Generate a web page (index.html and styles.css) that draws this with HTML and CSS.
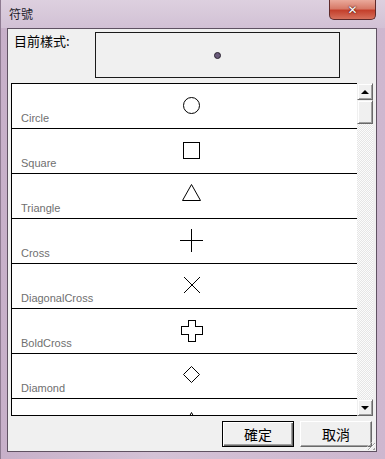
FILE: index.html
```html
<!DOCTYPE html>
<html>
<head>
    <title>符號</title>
    <link rel="stylesheet" href="styles.css">
</head>
<body>
    <div class="window">
        <!-- Barra de título -->
        <div class="titlebar">
            <span class="title">符號</span>
            <button class="close">&#x2715;</button>
        </div>

        <div class="client">
            <!-- Estilo actual -->
            <div class="current">
                <span class="current-label">目前樣式:</span>
                <div class="preview"><span class="dot"></span></div>
            </div>

            <!-- Lista de símbolos -->
            <div class="list">
                <div class="rows">
                    <div class="row">
                        <svg class="shape" width="24" height="24"><circle cx="11.5" cy="12.5" r="8"/></svg>
                        <span class="name">Circle</span>
                    </div>
                    <div class="row">
                        <svg class="shape" width="24" height="24"><rect x="3.5" y="4.5" width="16" height="16"/></svg>
                        <span class="name">Square</span>
                    </div>
                    <div class="row">
                        <svg class="shape" width="24" height="24"><polygon points="11.5,1.5 20.5,17.5 2.5,17.5"/></svg>
                        <span class="name">Triangle</span>
                    </div>
                    <div class="row">
                        <svg class="shape crisp" width="24" height="24"><path d="M0 12.5H23M11.5 1V24"/></svg>
                        <span class="name">Cross</span>
                    </div>
                    <div class="row">
                        <svg class="shape crisp" width="24" height="24"><path d="M4 4L20 20M20 4L4 20"/></svg>
                        <span class="name">DiagonalCross</span>
                    </div>
                    <div class="row">
                        <svg class="shape crisp" width="24" height="24"><polygon points="8.5,2.5 15.5,2.5 15.5,8.5 22.5,8.5 22.5,16.5 15.5,16.5 15.5,23.5 8.5,23.5 8.5,16.5 1.5,16.5 1.5,8.5 8.5,8.5"/></svg>
                        <span class="name">BoldCross</span>
                    </div>
                    <div class="row">
                        <svg class="shape" width="24" height="24"><polygon points="11.5,3.5 19.5,11.5 11.5,19.5 3.5,11.5"/></svg>
                        <span class="name">Diamond</span>
                    </div>
                    <div class="row">
                        <svg class="shape" width="24" height="24"><polygon points="11.5,4.5 20.5,21.5 2.5,21.5"/></svg>
                    </div>
                </div>
                <div class="scrollbar">
                    <div class="sb-btn"><span class="arrow-up"></span></div>
                    <div class="sb-thumb"></div>
                    <div class="sb-track"></div>
                    <div class="sb-btn"><span class="arrow-down"></span></div>
                </div>
            </div>

            <!-- Botones -->
            <div class="actions">
                <button class="btn default">確定</button>
                <button class="btn">取消</button>
            </div>
            <div class="grip"></div>
        </div>
    </div>
</body>
</html>
```

FILE: styles.css
```css
body {
    margin: 0;
    padding: 0;
    font-family: "Noto Sans CJK TC", "Liberation Sans", sans-serif;
}

.window {
    width: 385px;
    height: 459px;
    box-sizing: border-box;
    padding: 0 8px 7px 6px;
    background: linear-gradient(to right, #c7b0c9, #d4c2d6 40%, #cdb7cf);
    border-left: 1px solid #8e7b91;
    display: flex;
    flex-direction: column;
}

/* Barra de título */
.titlebar {
    height: 28px;
    display: flex;
    justify-content: space-between;
    align-items: flex-start;
    margin-right: -8px;
    margin-left: -6px;
    background: linear-gradient(to bottom, #ddd0df, #d2c1d5);
}
.title {
    padding: 6px 0 0 8px;
    font-size: 12px;
    line-height: 16px;
    color: #1c1c2a;
}
.close {
    width: 47px;
    height: 20px;
    margin-right: 9px;
    padding: 0;
    border: 1px solid #5e2a2a;
    border-top: 0;
    border-radius: 0 0 5px 5px;
    background: linear-gradient(to bottom, #eaa99b, #d77a68 45%, #c4402c 55%, #d6705c);
    color: #fff;
    font-family: "DejaVu Sans", sans-serif;
    font-size: 12px;
    font-weight: bold;
    line-height: 18px;
    text-shadow: 0 0 2px #4a1010, 0 0 1px #4a1010;
}

/* Área cliente */
.client {
    position: relative;
    flex: 1;
    background-color: #f0f0f0;
    border: 1px solid #5f5262;
    display: flex;
    flex-direction: column;
}

.current {
    display: flex;
    align-items: flex-start;
    padding: 3px 0 0 6px;
}
.current-label {
    width: 81px;
    font-size: 13px;
    line-height: 18px;
    color: #000;
}
.preview {
    width: 243px;
    height: 44px;
    border: 1px solid #1a1a1a;
    display: flex;
    align-items: center;
    justify-content: center;
}
.dot {
    width: 5px;
    height: 5px;
    border-radius: 50%;
    background-color: #6a5a7a;
    border: 1px solid #2a2430;
}

/* Lista */
.list {
    display: flex;
    height: 333px;
    margin: 5px 3px 0 3px;
}
.rows {
    flex: 1;
    overflow: hidden;
    background-color: #fff;
    border: 1px solid #000;
    border-right: 0;
}
.row {
    display: grid;
    height: 44px;
    border-bottom: 1px solid #000;
}
.row > * {
    grid-area: 1 / 1;
}
.shape {
    align-self: start;
    margin: 9px 0 0 168px;
    overflow: visible;
    fill: none;
    stroke: #000;
    stroke-width: 1;
}
.crisp {
    shape-rendering: crispEdges;
}
.name {
    align-self: end;
    padding: 0 0 3px 9px;
    font-family: "Liberation Sans", Arial, sans-serif;
    font-size: 11px;
    line-height: 13px;
    color: #6f6f6f;
}

/* Barra de desplazamiento */
.scrollbar {
    width: 16px;
    display: flex;
    flex-direction: column;
}
.sb-btn,
.sb-thumb {
    box-sizing: border-box;
    background-color: #f0f0f0;
    border-top: 1px solid #f0f0f0;
    border-left: 1px solid #f0f0f0;
    border-right: 1px solid #696969;
    border-bottom: 1px solid #696969;
    box-shadow: inset 1px 1px 0 #fff, inset -1px -1px 0 #a0a0a0;
}
.sb-btn {
    height: 17px;
    display: flex;
    align-items: center;
    justify-content: center;
}
.sb-thumb {
    height: 24px;
}
.sb-track {
    flex: 1;
    background: repeating-conic-gradient(#fcfcfc 0 25%, #e6e6e6 0 50%) 0 0 / 2px 2px;
}
.arrow-up,
.arrow-down {
    width: 0;
    height: 0;
    border-left: 4px solid transparent;
    border-right: 4px solid transparent;
}
.arrow-up {
    border-bottom: 4px solid #000;
}
.arrow-down {
    border-top: 4px solid #000;
}

/* Botones */
.actions {
    display: flex;
    justify-content: flex-end;
    gap: 6px;
    margin: 5px 4px 0 0;
}
.btn {
    width: 72px;
    height: 26px;
    padding: 0;
    background-color: #f0f0f0;
    border: 1px solid #696969;
    border-top-color: #fff;
    border-left-color: #fff;
    box-shadow: inset -1px -1px 0 #a0a0a0;
    font-family: "Noto Sans CJK TC", sans-serif;
    font-size: 14px;
    color: #000;
}
.btn.default {
    border: 1px solid #000;
    box-shadow: inset 1px 1px 0 #fff, inset -1px -1px 0 #696969, inset -2px -2px 0 #a0a0a0;
}

.grip {
    position: absolute;
    right: 1px;
    bottom: 1px;
    width: 11px;
    height: 11px;
    background: repeating-linear-gradient(135deg, transparent 0 2px, #a0a0a0 2px 3px, #fff 3px 4px);
    clip-path: polygon(100% 0, 100% 100%, 0 100%);
}
```
